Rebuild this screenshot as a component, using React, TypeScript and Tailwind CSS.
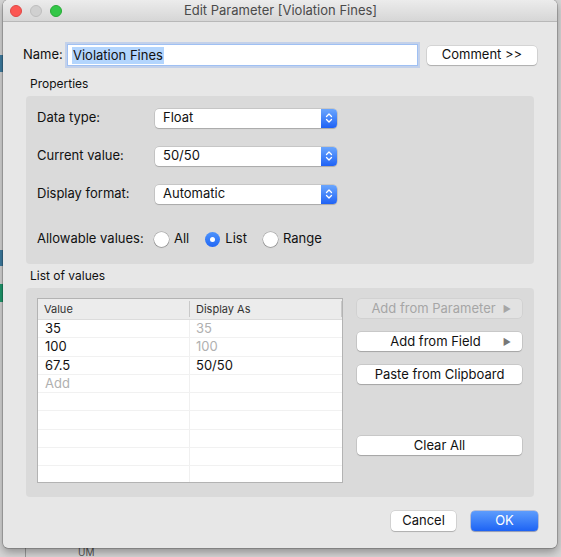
import React from 'react';

const font = { fontFamily: 'Inter, "Liberation Sans", sans-serif' };

const Stepper = () => (
  <div className="w-[16px] h-full rounded-r-[4px] bg-gradient-to-b from-[#6aa5fd] to-[#1f61f5] flex items-center justify-center">
    <svg width="8" height="12" viewBox="0 0 8 12" fill="none" stroke="white" strokeWidth="1.3" strokeLinecap="round" strokeLinejoin="round">
      <path d="M1.5 4.5 L4 2 L6.5 4.5" />
      <path d="M1.5 7.5 L4 10 L6.5 7.5" />
    </svg>
  </div>
);

const Select = ({ value }: { value: string }) => (
  <div className="w-[182px] h-[19px] flex bg-white rounded-[4px] shadow-[0_0_0_0.5px_rgba(0,0,0,0.18),0_1px_1px_rgba(0,0,0,0.15)]">
    <div className="flex-1 flex items-center pl-[8px] text-[13px] text-[#111]">{value}</div>
    <Stepper />
  </div>
);

const Radio = ({ label, checked }: { label: string, checked?: boolean }) => (
  <div className="flex items-center gap-[5px]">
    {checked ? (
      <div className="w-[15px] h-[15px] rounded-full bg-gradient-to-b from-[#4e93fb] to-[#2166f5] flex items-center justify-center">
        <div className="w-[5px] h-[5px] rounded-full bg-white" />
      </div>
    ) : (
      <div className="w-[15px] h-[15px] rounded-full bg-white shadow-[0_0_0_0.5px_rgba(0,0,0,0.3),0_1px_1px_rgba(0,0,0,0.15)]" />
    )}
    <span className="text-[13px] text-[#111]">{label}</span>
  </div>
);

const Btn = ({ children, className = '', disabled }: { children: React.ReactNode, className?: string, disabled?: boolean }) => (
  <div className={`h-[19px] rounded-[4px] flex items-center justify-center text-[13px] relative ${disabled ? 'bg-[#e2e2e2] text-[#a6a6a6] shadow-[0_0_0_0.5px_rgba(0,0,0,0.08)]' : 'bg-white text-[#111] shadow-[0_0_0_0.5px_rgba(0,0,0,0.16),0_1px_1px_rgba(0,0,0,0.18)]'} ${className}`}>
    {children}
  </div>
);

const rows = [
  { v: '35', d: '35', dim: true },
  { v: '100', d: '100', dim: true },
  { v: '67.5', d: '50/50', dim: false },
];

export default function App() {
  return (
    <div className="w-[561px] h-[557px] bg-[#d6d6d6] relative overflow-hidden" style={font}>
      {/* window behind */}
      <div className="absolute left-0 top-[55px] w-[4px] h-[17px] bg-[#3f7ea3]" />
      <div className="absolute left-0 top-[284px] w-[4px] h-[18px] bg-[#1f9a6e]" />
      <div className="absolute left-0 top-[250px] w-[4px] h-[16px] bg-[#3f7ea3]" />
      <div className="absolute left-[25px] top-[548px] w-px h-[10px] bg-[#9a9a9a]" />
      <div className="absolute left-[78px] top-[547px] text-[10px] leading-[10px] text-[#555]">UM</div>

      <div className="relative ml-[3px] w-[554px] h-[548px] rounded-[5px] bg-[#e7e7e7] overflow-hidden shadow-[0_0_0_0.5px_rgba(0,0,0,0.35),0_4px_10px_rgba(0,0,0,0.35)] flex flex-col">
        {/* title bar */}
        <div className="h-[22px] shrink-0 bg-gradient-to-b from-[#ececec] to-[#d6d6d6] border-b border-[#b8b8b8] flex items-center relative">
          <div className="flex items-center gap-[8px] pl-[7px]">
            <div className="w-[12px] h-[12px] rounded-full bg-[#fc5753] border border-[#df4744]" />
            <div className="w-[12px] h-[12px] rounded-full bg-[#d0d0d0] border border-[#bdbdbd]" />
            <div className="w-[12px] h-[12px] rounded-full bg-[#33c748] border border-[#27aa35]" />
          </div>
          <div className="flex-1 text-center text-[13px] text-[#4a4a4a] pr-[58px]">Edit Parameter [Violation Fines]</div>
        </div>

        {/* name row */}
        <div className="flex items-center pl-[20px] mt-[23px]">
          <div className="w-[45px] text-[13px] text-[#111]">Name:</div>
          <div className="w-[349px] h-[20px] bg-white flex items-center pl-[4px] shadow-[0_0_0_1px_#9fc0f3,0_0_0_3px_rgba(130,170,240,0.35)]">
            <span className="bg-[#b3d5fd] text-[13px] text-[#111] px-[1px] leading-[17px]">Violation Fines</span>
          </div>
          <Btn className="w-[110px] ml-[10px]">Comment &gt;&gt;</Btn>
        </div>

        {/* properties */}
        <div className="pl-[27px] mt-[11px] text-[12px] leading-[16px] text-[#111]">Properties</div>
        <div className="mx-[23px] mt-[4px] h-[168px] rounded-[4px] bg-[#dadada] pt-[12px] pl-[11px] flex flex-col gap-[18px]">
          {[
            ['Data type:', 'Float'],
            ['Current value:', '50/50'],
            ['Display format:', 'Automatic'],
          ].map(([l, v]) => (
            <div key={l} className="flex items-center h-[20px]">
              <div className="w-[118px] text-[13px] text-[#111]">{l}</div>
              <Select value={v} />
            </div>
          ))}
          <div className="flex items-center h-[20px] mt-[7px]">
            <div className="w-[117px] text-[13px] text-[#111]">Allowable values:</div>
            <div className="flex items-center gap-[16px]">
              <Radio label="All" />
              <Radio label="List" checked />
              <Radio label="Range" />
            </div>
          </div>
        </div>

        {/* list of values */}
        <div className="pl-[27px] mt-[4px] text-[12px] leading-[16px] text-[#111]">List of values</div>
        <div className="mx-[23px] mt-[4px] h-[209px] rounded-[4px] bg-[#dadada] pt-[10px] pl-[11px] flex gap-[14px]">
          <div className="w-[306px] h-[185px] bg-white border border-[#b3b3b3] flex flex-col overflow-hidden">
            <div className="h-[21px] shrink-0 bg-[#ececec] border-b border-[#dcdcdc] flex text-[11px] text-[#333]">
              <div className="w-[152px] flex items-center pl-[6px] border-r border-[#c9c9c9] my-[2px]">Value</div>
              <div className="flex-1 flex items-center pl-[6px] border-r border-[#c9c9c9] my-[2px]">Display As</div>
            </div>
            {[...rows, null, null, null, null, null, null].map((r, i) => (
              <div key={i} className="h-[18.3px] shrink-0 flex border-b border-[#f1f1f1] text-[13px]">
                <div className={`w-[152px] pl-[7px] flex items-center border-r border-[#f0f0f0] ${r ? 'text-[#111]' : 'text-[#b0b0b0]'}`}>
                  {r ? r.v : i === 3 ? 'Add' : ''}
                </div>
                <div className={`flex-1 pl-[6px] flex items-center ${r && r.dim ? 'text-[#b0b0b0]' : 'text-[#111]'}`}>{r ? r.d : ''}</div>
              </div>
            ))}
          </div>
          <div className="flex flex-col pt-[1px]">
            <Btn disabled className="w-[165px] pr-[12px]">
              Add from Parameter
              <span className="absolute right-[11px] text-[9px]">▶</span>
            </Btn>
            <Btn className="w-[165px] mt-[14px]">
              <span className="pr-[8px]">Add from Field</span>
              <span className="absolute right-[11px] text-[9px] text-[#777]">▶</span>
            </Btn>
            <Btn className="w-[165px] mt-[14px]">Paste from Clipboard</Btn>
            <Btn className="w-[165px] mt-[52px]">Clear All</Btn>
          </div>
        </div>

        {/* footer */}
        <div className="flex justify-end items-center gap-[15px] pr-[19px] mt-[14px]">
          <Btn className="w-[65px] h-[20px]">Cancel</Btn>
          <div className="w-[67px] h-[20px] rounded-[4px] bg-gradient-to-b from-[#5d9cfc] to-[#1d62f4] text-white text-[13px] flex items-center justify-center shadow-[0_0_0_0.5px_rgba(0,40,160,0.4),0_1px_1px_rgba(0,0,0,0.2)]">OK</div>
        </div>
      </div>
    </div>
  );
}
